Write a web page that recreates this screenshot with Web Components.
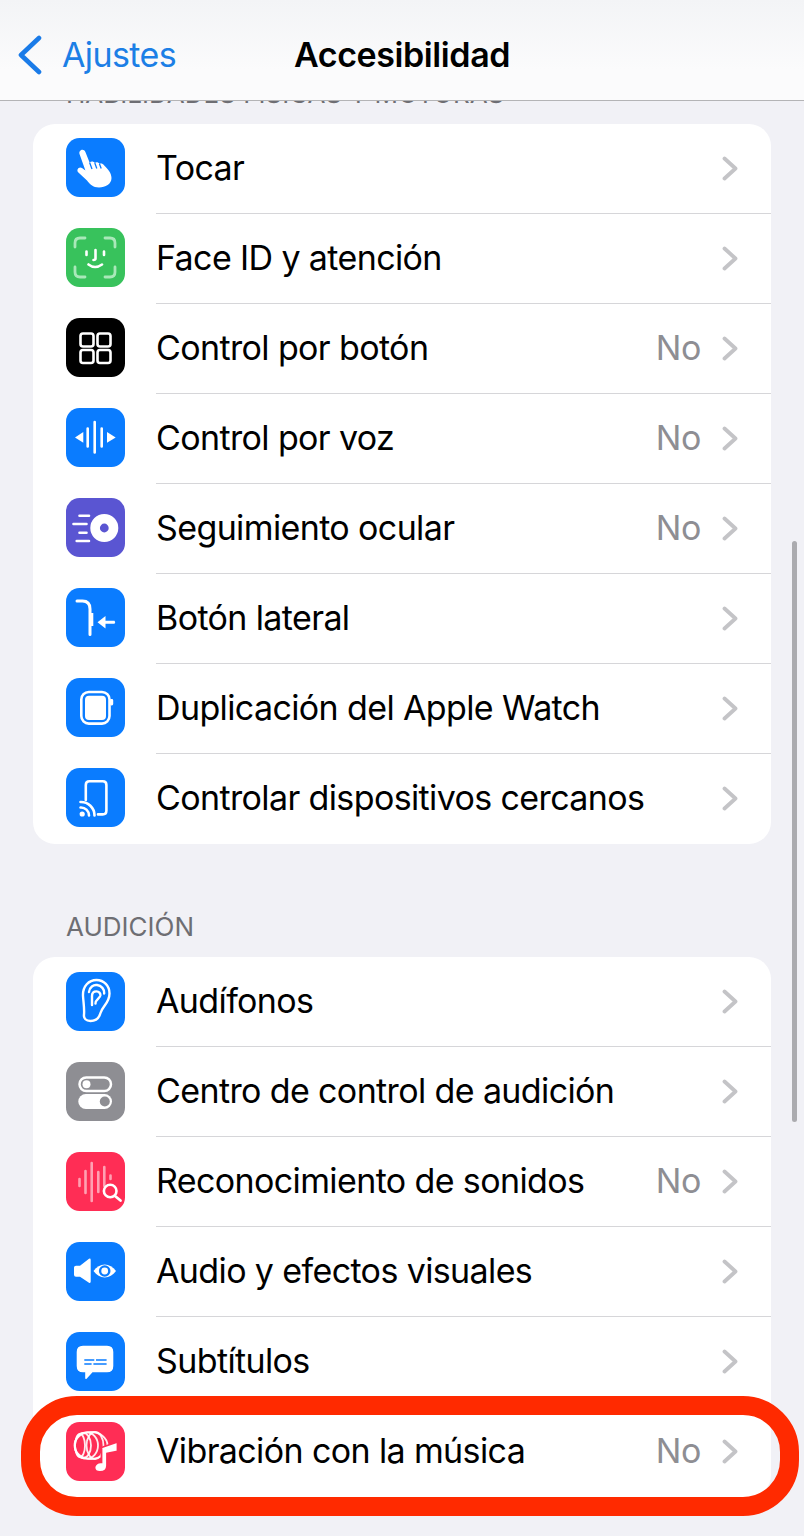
<!DOCTYPE html>
<html lang="es"><head><meta charset="utf-8">
<style>
html,body{margin:0;padding:0;background:#f1f1f6}
body{font-family:Inter,"Liberation Sans",sans-serif;color:#000}
</style></head><body>
<settings-screen>
  <nav-bar back="Ajustes" title="Accesibilidad"></nav-bar>
  <section-header h="23">HABILIDADES FÍSICAS Y MOTORAS</section-header>
  <settings-card style="--im:3px;--tp:3px">
    <settings-row icon="touch" color="#0a7cff">Tocar</settings-row>
    <settings-row icon="face" color="#38c25c">Face ID y atención</settings-row>
    <settings-row icon="grid" color="#000" value="No">Control por botón</settings-row>
    <settings-row icon="voice" color="#0a7cff" value="No">Control por voz</settings-row>
    <settings-row icon="eye" color="#5a55d2" value="No">Seguimiento ocular</settings-row>
    <settings-row icon="side" color="#0a7cff">Botón lateral</settings-row>
    <settings-row icon="watch" color="#0a7cff">Duplicación del Apple Watch</settings-row>
    <settings-row icon="device" color="#0a7cff" last>Controlar dispositivos cercanos</settings-row>
  </settings-card>
  <section-header h="113">AUDICIÓN</section-header>
  <settings-card style="--im:1px;--tp:2px">
    <settings-row icon="ear" color="#0a7cff">Audífonos</settings-row>
    <settings-row icon="toggles" color="#8e8e93">Centro de control de audición</settings-row>
    <settings-row icon="sound" color="#ff2d55" value="No">Reconocimiento de sonidos</settings-row>
    <settings-row icon="av" color="#0a7cff">Audio y efectos visuales</settings-row>
    <settings-row icon="subs" color="#0a7cff">Subtítulos</settings-row>
    <settings-row icon="music" color="#ff2d55" value="No" last>Vibración con la música</settings-row>
  </settings-card>
  <scroll-thumb></scroll-thumb>
  <highlight-ring></highlight-ring>
</settings-screen>
<script>
const ICONS={
touch:`<path fill="#fff" d="M13.5 16C12.4 12 17.8 10 19.4 14L23.6 24.6C25.2 23 27.6 23.2 28.8 25 30.2 23.8 32.4 24.2 33.4 25.8 35 25 37 25.6 38 27.2 42 31 45.5 35 45.5 40 45.5 46 39.5 49.5 33 49.5 27 49.5 23.5 46 21 42.5L12.4 34.6C9.8 31.8 13 28 16 30L19.4 32.6Z"/><path stroke="#0a7cff" stroke-width="1.3" fill="none" d="M23.6 24.6 26 31M28.8 25 30.8 30.5M33.4 25.8 35.2 30.5"/>`,
face:`<g fill="none" stroke="#a9e8b9" stroke-width="2.8" stroke-linecap="round"><path d="M9 19V15Q9 10 14 10H19M39 10H44Q49 10 49 15V19M49 39V44Q49 49 44 49H39M19 49H14Q9 49 9 44V39"/></g><g fill="none" stroke="#fff" stroke-width="2.6" stroke-linecap="round"><path d="M20.5 23.5V27M38 23.5V27M29.5 22V30.5Q29.5 32 27.5 32M22.5 36.5Q29 41.5 36 36.5"/></g>`,
grid:`<g fill="none" stroke="#fff" stroke-width="2.6"><rect x="14.5" y="15.5" width="13" height="13" rx="2.5"/><rect x="31.5" y="15.5" width="13" height="13" rx="2.5"/><rect x="14.5" y="32" width="13" height="13" rx="2.5"/><rect x="31.5" y="32" width="13" height="13" rx="2.5"/></g>`,
voice:`<path fill="#fff" d="M17.3 24V34.8L9 29.4ZM41 24V34.8L49.7 29.4Z"/><g stroke="#fff" stroke-width="2.6" stroke-linecap="round"><path d="M21.7 20.5V38.5M28.7 14V44.5M35.7 20.5V38.5"/></g>`,
eye:`<circle cx="38.3" cy="30" r="9.2" fill="none" stroke="#fff" stroke-width="9.6"/><g stroke="#fff" stroke-width="2.6" stroke-linecap="round"><path d="M13.5 17.7H23M7.5 26H20.5M13.5 34.7H20.5M10.7 43H23"/></g>`,
side:`<path fill="none" stroke="#fff" stroke-width="3" stroke-linecap="round" d="M11 13H16.5Q24 13 24 21V46.5"/><path stroke="#fff" stroke-width="2.6" d="M26 25V38"/><path fill="#fff" d="M31.5 34.3 39.5 28V32.8H48.5Q50 34.3 48.5 35.8H39.5V40.6Z"/>`,
watch:`<rect x="15.3" y="14" width="28.2" height="31.6" rx="7.5" fill="none" stroke="#fff" stroke-width="2.6"/><rect x="19" y="17.7" width="21" height="24.3" rx="4" fill="#fff"/><rect x="44" y="21" width="3.2" height="6.5" rx="1.4" fill="#fff"/>`,
device:`<path fill="none" stroke="#fff" stroke-width="2.6" stroke-linecap="round" d="M19.8 32V17Q19.8 13.3 23.5 13.3H36.7Q40.4 13.3 40.4 17V42.5Q40.4 46.4 36.7 46.4H32"/><circle cx="16.2" cy="46" r="2.6" fill="#fff"/><g fill="none" stroke="#fff" stroke-width="2.6" stroke-linecap="round"><path d="M14.5 39.5A8 8 0 0 1 23 47.5M14.5 34A13.5 13.5 0 0 1 28.5 47.5"/></g>`,
ear:`<g fill="none" stroke="#fff" stroke-width="2.4" stroke-linecap="round" stroke-linejoin="round"><path d="M17 24C16.5 14 23 8 30.5 8 38 8 43.5 14 43.5 21.5 43.5 31 36.5 34 34.5 41 33 46.5 29 49 24.5 49 20 49 17.5 46.5 18 42.5 18.6 37 17.4 30 17 24Z"/><path d="M23 20C23.5 15 27.5 12.5 31 13 35.5 13.6 38.6 17.2 38.2 21.5"/><path d="M26 33V24C26 21 28 19.4 30.5 19.4 33 19.4 34.6 21.4 34.4 23.4 34 26.5 29.5 27 29.5 31.5"/></g>`,
toggles:`<rect x="13.5" y="15.5" width="31.5" height="13.5" rx="6.75" fill="none" stroke="#fff" stroke-width="2.5"/><circle cx="20.5" cy="22.2" r="4" fill="#fff"/><rect x="12.3" y="32" width="33.7" height="15" rx="7.5" fill="#fff"/><circle cx="38.8" cy="39.5" r="5" fill="#8e8e93"/>`,
sound:`<g stroke="#fff" stroke-opacity=".55" stroke-width="2.6" stroke-linecap="round"><path d="M13.5 27V34M19.5 19V41M25.7 11V49M32.3 20V40M38.3 15V34M44.5 23.5V27"/></g><circle cx="44.2" cy="39" r="6.3" fill="#ff2d55" stroke="#fff" stroke-width="2.6"/><path stroke="#fff" stroke-width="2.8" stroke-linecap="round" d="M49 44 54.5 48.5"/>`,
av:`<path fill="#fff" d="M8 25.5Q8 23.7 10 23.7H14L23 16.8Q24.7 16 24.7 18V39.5Q24.7 41.6 23 40.7L14 34.7H10Q8 34.7 8 32.8Z"/><path fill="#fff" d="M27.5 29C30.5 24.8 34.5 22.5 38.7 22.5S47 24.8 50 29C47 33.2 43 35.5 38.7 35.5S30.5 33.2 27.5 29Z"/><circle cx="38.7" cy="29" r="5.8" fill="#0a7cff"/><circle cx="38.7" cy="29" r="3.4" fill="#fff"/>`,
subs:`<path fill="#fff" d="M17 13.7H41Q47.3 13.7 47.3 20V34Q47.3 40.3 41 40.3H26.5L20.6 46.8Q19.2 47.6 19.2 46V40.3H17Q10.7 40.3 10.7 34V20Q10.7 13.7 17 13.7Z"/><g stroke="#0a7cff" stroke-width="1.5"><path d="M18.3 28H28.3M30 28H40.6M18.3 32H25.6M27.4 32H40.6"/></g>`,
music:`<g fill="none" stroke="#fff" stroke-opacity=".9" stroke-width="1.8"><ellipse cx="25" cy="23.5" rx="16.5" ry="13.5"/><ellipse cx="20.5" cy="23.5" rx="11.5" ry="13.2"/><ellipse cx="17" cy="23.5" rx="8" ry="12.6"/><ellipse cx="14" cy="23.5" rx="5" ry="11.6"/><ellipse cx="29" cy="23.5" rx="8.5" ry="13.5"/></g><path fill="#fff" stroke="#ff2d55" stroke-width="1.8" d="M35.5 25.5 51.5 20V29.5L41 31.5V43.5C41 47.5 38 50 34 50 30.5 50 28.5 48 28.5 45.5 28.5 42.5 31.5 40 35.5 40.3Z"/>`
};
class SettingsScreen extends HTMLElement{constructor(){super();this.attachShadow({mode:'open'}).innerHTML=`<style>:host{display:flex;flex-direction:column;position:relative;width:804px;height:1536px;overflow:hidden;background:#f1f1f6}</style><slot></slot>`}}
class NavBar extends HTMLElement{constructor(){super();const s=this.attachShadow({mode:'open'});s.innerHTML=`<style>
:host{display:grid;grid-template-columns:1fr auto 1fr;align-items:center;box-sizing:border-box;height:101px;padding:9px 0 0;border-bottom:1px solid #b4b4b6;background:linear-gradient(#f3f4f6,#fbfbfc 70%);flex:none}
.back{display:flex;align-items:center;gap:20px;padding-left:17px;color:#1c7fe6;font-size:34px;letter-spacing:-.6px}
svg{display:block}
.t{font-size:34px;font-weight:600;letter-spacing:-.4px}
</style><div class="back"><svg width="25" height="40" viewBox="0 0 25 40"><path d="M22 3 4 20 22 37" fill="none" stroke="#1a7be8" stroke-width="4.6" stroke-linecap="round" stroke-linejoin="round"/></svg><span>${this.getAttribute('back')}</span></div><div class="t">${this.getAttribute('title')}</div><div></div>`}}
class SectionHeader extends HTMLElement{constructor(){super();const s=this.attachShadow({mode:'open'});s.innerHTML=`<style>
:host{display:flex;flex:none;flex-direction:column;justify-content:flex-end;overflow:hidden;box-sizing:border-box;height:${this.getAttribute('h')}px;padding:0 0 14px 66px;color:#6e6e73;font-size:26px;line-height:32px;white-space:nowrap}
</style><div><slot></slot></div>`}}
class SettingsCard extends HTMLElement{constructor(){super();this.attachShadow({mode:'open'}).innerHTML=`<style>:host{display:block;flex:none;margin:0 33px;background:#fff;border-radius:22px;overflow:hidden}</style><slot></slot>`}}
class SettingsRow extends HTMLElement{constructor(){super();const a=n=>this.getAttribute(n),v=a('value'),s=this.attachShadow({mode:'open'});s.innerHTML=`<style>
:host{display:flex;align-items:stretch;height:90px;padding-left:33px}
.ic{flex:none;align-self:center;width:59px;height:59px;margin:0 31px var(--im,0) 0;display:block}
.in{flex:1;display:flex;align-items:center;padding-right:33px;box-sizing:border-box;border-bottom:1px solid ${a('last')!==null?'transparent':'#d6d6d9'}}
.l{flex:1;font-size:34px;letter-spacing:-.62px;white-space:nowrap;padding-bottom:var(--tp,0)}
.v{color:#8e8e93;font-size:34px;letter-spacing:-.4px;margin-right:21px;padding-bottom:2px}
.c{display:block}
</style><svg class="ic" viewBox="0 0 59 59"><rect width="59" height="59" rx="13.5" fill="${a('color')}"/>${ICONS[a('icon')]}</svg><div class="in"><div class="l"><slot></slot></div>${v?`<div class="v">${v}</div>`:''}<svg class="c" width="16" height="25" viewBox="0 0 16 25"><path d="M2.5 2.5 13.5 12.5 2.5 22.5" fill="none" stroke="#c4c4c7" stroke-width="3.8" stroke-linecap="round" stroke-linejoin="round"/></svg></div>`}}
class ScrollThumb extends HTMLElement{constructor(){super();this.attachShadow({mode:'open'}).innerHTML=`<style>:host{position:absolute;left:792px;top:541px;width:5px;height:581px;border-radius:3px;background:#ababaf}</style>`}}
class HighlightRing extends HTMLElement{constructor(){super();this.attachShadow({mode:'open'}).innerHTML=`<style>:host{position:absolute;left:21px;top:1396px;width:778px;height:120px;box-sizing:border-box;border:19.5px solid #ff2a00;border-radius:56px}</style>`}}
for(const [n,c] of Object.entries({'settings-screen':SettingsScreen,'nav-bar':NavBar,'section-header':SectionHeader,'settings-card':SettingsCard,'settings-row':SettingsRow,'scroll-thumb':ScrollThumb,'highlight-ring':HighlightRing}))customElements.define(n,c);
</script>
</body></html>
